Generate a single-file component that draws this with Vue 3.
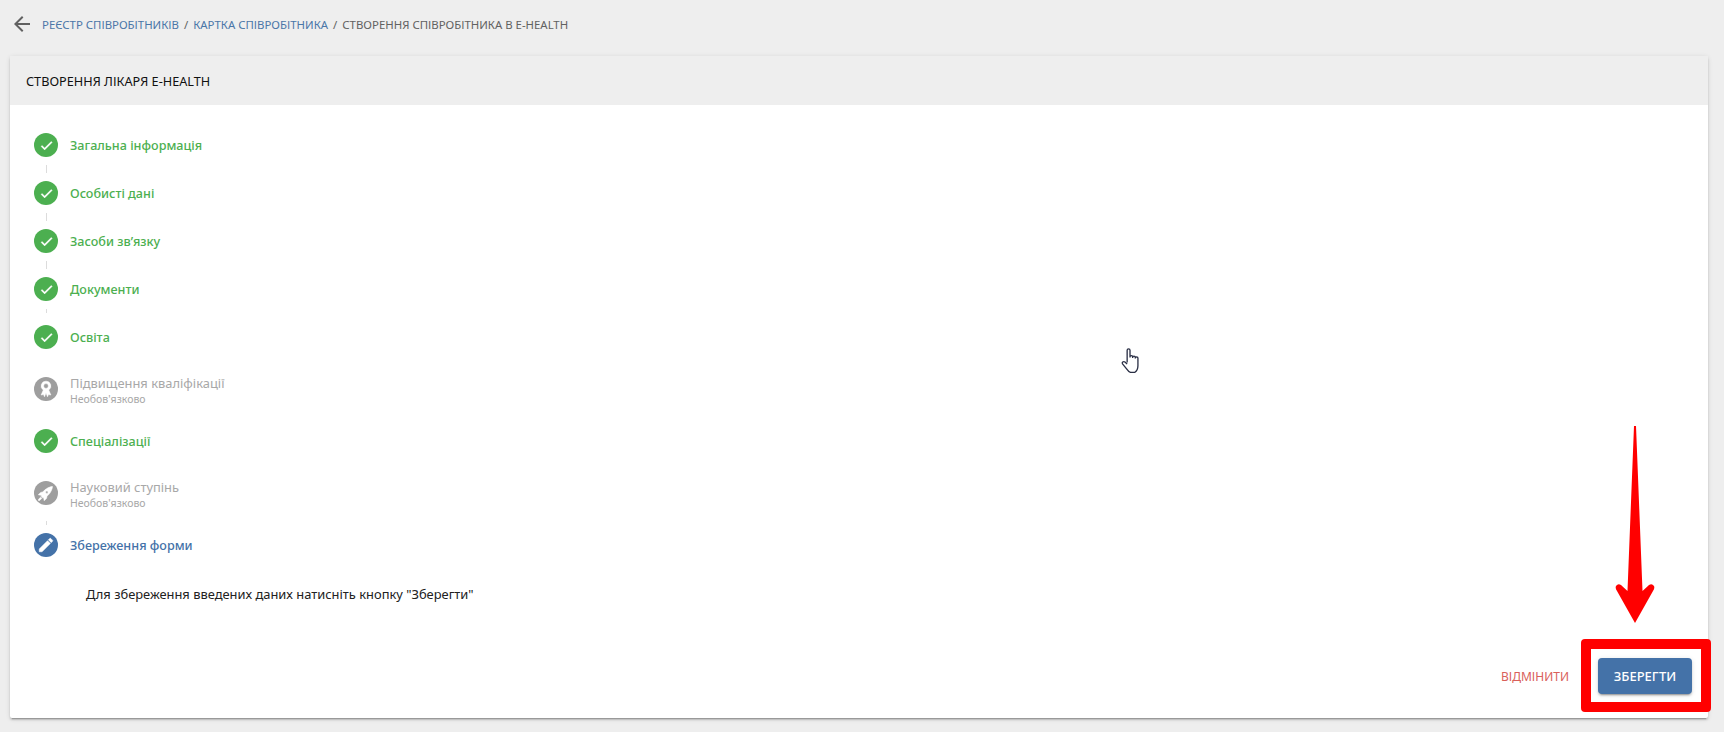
<script setup>
const check = 'M9 16.17L4.83 12l-1.42 1.41L9 19 21 7l-1.41-1.41z'
const pencil = 'M3 17.25V21h3.75L17.81 9.94l-3.75-3.75L3 17.25zM20.71 7.04c.39-.39.39-1.02 0-1.41l-2.34-2.34c-.39-.39-1.02-.39-1.41 0l-1.83 1.83 3.75 3.75 1.83-1.83z'
const rocket = 'M2.81,14.12L5.64,11.29L8.17,10.79C11.39,6.41 17.55,4.22 19.78,4.22C19.78,6.45 17.59,12.61 13.21,15.83L12.71,18.36L9.88,21.19L9.17,17.66C7.76,17.66 7.76,17.66 7.05,16.95C6.34,16.24 6.34,16.24 6.34,14.83L2.81,14.12M5.64,16.95L7.05,18.36L4.39,21.03H2.97V19.61L5.64,16.95M13,9.5A1.5,1.5 0 0,0 11.5,11A1.5,1.5 0 0,0 13,12.5A1.5,1.5 0 0,0 14.5,11A1.5,1.5 0 0,0 13,9.5Z'
const award = 'M12 1.500a6.500 6.500 0 0 0-3.600 11.900L5.500 20l3.200-.6 1.300 3 2-5.200 2 5.200 1.300-3 3.200.6-2.900-6.600A6.500 6.500 0 0 0 12 1.500zm0 3.300a3.200 3.200 0 1 1 0 6.400 3.200 3.200 0 0 1 0-6.400z'

const steps = [
  { label: 'Загальна інформація', state: 'done', icon: check, size: 15, line: { top: 8, h: 8 } },
  { label: 'Особисті дані', state: 'done', icon: check, size: 15, line: { top: 8, h: 8 } },
  { label: 'Засоби зв’язку', state: 'done', icon: check, size: 15, line: { top: 8, h: 8 } },
  { label: 'Документи', state: 'done', icon: check, size: 15, line: { top: 8, h: 4 } },
  { label: 'Освіта', state: 'done', icon: check, size: 15 },
  { label: 'Підвищення кваліфікації', state: 'optional', icon: award, size: 18 },
  { label: 'Спеціалізації', state: 'done', icon: check, size: 15 },
  { label: 'Науковий ступінь', state: 'optional', icon: rocket, size: 20, line: { top: 12, h: 4 } },
  { label: 'Збереження форми', state: 'active', icon: pencil, size: 18, last: true }
]
</script>

<template>
  <div class="page">
    <nav class="crumbs">
      <svg class="back" viewBox="0 0 24 24" width="24" height="24"><path d="M20 11H7.83l5.59-5.59L12 4l-8 8 8 8 1.41-1.41L7.83 13H20v-2z" /></svg>
      <a class="link">РЕЄСТР СПІВРОБІТНИКІВ</a>
      <span class="sep">/</span>
      <a class="link">КАРТКА СПІВРОБІТНИКА</a>
      <span class="sep">/</span>
      <span class="current">СТВОРЕННЯ СПІВРОБІТНИКА В E-HEALTH</span>
    </nav>

    <section class="card">
      <header class="card-head">СТВОРЕННЯ ЛІКАРЯ E-HEALTH</header>
      <div class="card-body">
        <template v-for="s in steps" :key="s.label">
          <div class="step" :class="[s.state]">
            <span class="dot">
              <svg viewBox="0 0 24 24" :width="s.size" :height="s.size"><path :d="s.icon" fill="#fff" stroke="#fff" stroke-width="0.7" /></svg>
            </span>
            <div class="step-text">
              <div class="label">{{ s.label }}</div>
              <div v-if="s.state === 'optional'" class="hint">Необов'язково</div>
            </div>
          </div>
          <div v-if="!s.last" class="gap">
            <i v-if="s.line" class="line" :style="{ marginTop: s.line.top + 'px', height: s.line.h + 'px' }"></i>
          </div>
        </template>
        <p class="note">Для збереження введених даних натисніть кнопку "Зберегти"</p>
      </div>
      <footer class="card-foot">
        <button class="btn-cancel">ВІДМІНИТИ</button>
        <button class="btn-save">ЗБЕРЕГТИ</button>
      </footer>
    </section>

    <div class="red-box"></div>
    <svg class="red-arrow" viewBox="0 0 44 200" width="44" height="200">
      <path d="M21 1 L23 1 L29.500 166 L36 160 Q39 158 41 161 Q42 163 40 166 L22 198 L4 166 Q2 163 3 161 Q5 158 8 160 L14.500 166 Z" fill="#f00" />
    </svg>
    <svg class="cursor" viewBox="0 0 20 26" width="22" height="27" preserveAspectRatio="none">
      <path d="M6.5 15V3.2c0-2 2.6-2 2.6 0V10m0-.5c0-1.6 2.4-1.6 2.4 0v1m0-.5c0-1.5 2.400-1.500 2.400 0v1m0-.4c0-1.400 2.400-1.400 2.400 0V18c0 3-1.600 5.500-3 6.500H9.500c-1.500-.6-2.500-2-3.500-3.500L2.300 16.300c-1-1.500.8-3 2.200-1.800L6.500 16.500" fill="#fff" stroke="#2a2f45" stroke-width="1.200" stroke-linejoin="round" />
    </svg>
  </div>
</template>

<style>
html, body { margin: 0; overflow: hidden; }
</style>

<style scoped>
.page {
  position: relative;
  box-sizing: border-box;
  width: 1724px;
  height: 732px;
  padding: 0 16px 14px 10px;
  display: flex;
  flex-direction: column;
  background: #eeeeee;
  font-family: "Noto Sans", "Open Sans", sans-serif;
  overflow: hidden;
}
.crumbs {
  height: 48px;
  flex: none;
  display: flex;
  align-items: center;
  gap: 5px;
  font-size: 11.4px;
  color: #616161;
  white-space: nowrap;
}
.back { fill: #616161; margin-right: 3px; width: 24px; height: 24px; }
.link { color: #4a76a8; }
.sep { color: #616161; }
.card {
  margin-top: 8px;
  flex: 1;
  display: flex;
  flex-direction: column;
  background: #fff;
  border-radius: 2px;
  box-shadow: 0 3px 1px -2px rgba(0,0,0,.2), 0 2px 2px 0 rgba(0,0,0,.14), 0 1px 5px 0 rgba(0,0,0,.12);
}
.card-head {
  height: 49px;
  flex: none;
  box-sizing: border-box;
  padding-left: 16px;
  display: flex;
  align-items: center;
  background: #eeeeee;
  font-size: 12.7px;
  color: #111;
}
.card-body {
  flex: 1;
  padding: 28px 24px 0;
}
.step {
  display: flex;
  align-items: center;
  gap: 12px;
}
.dot {
  width: 24px;
  height: 24px;
  border-radius: 50%;
  flex: none;
  display: flex;
  align-items: center;
  justify-content: center;
}
.done .dot { background: #4caf50; }
.optional .dot { background: #9e9e9e; }
.active .dot { background: #4472a8; }
.step-text { padding-top: 1px; }
.label { font-size: 12.6px; font-weight: 500; line-height: 18px; }
.done .label { color: #4caf50; }
.active .label { color: #4472a8; }
.optional .label { color: #a8a8a8; font-size: 12.9px; font-weight: 400; line-height: 18px; }
.optional .step-text { height: 31px; }
.hint { font-size: 10.5px; line-height: 14px; color: #a8a8a8; }
.gap { height: 24px; display: flex; align-items: flex-start; }
.line { display: block; width: 1px; margin-left: 12px; background: #dcdcdc; }
.note {
  margin: 28px 0 0 52px;
  font-size: 12.9px;
  line-height: 18px;
  color: #212121;
}
.card-foot {
  flex: none;
  display: flex;
  justify-content: flex-end;
  align-items: center;
  gap: 29px;
  padding: 0 16px 24px 0;
}
.btn-cancel, .btn-save {
  font: inherit;
  border: 0;
  background: none;
  padding: 0;
  font-size: 13px;
  font-weight: 500;
}
.btn-cancel { color: #d9605a; font-size: 12px; font-weight: 400; }
.btn-save {
  width: 94px;
  height: 36px;
  border-radius: 4px;
  background: #4472a8;
  color: #fff;
  box-shadow: 0 3px 1px -2px rgba(0,0,0,.2), 0 2px 2px 0 rgba(0,0,0,.14), 0 1px 5px 0 rgba(0,0,0,.12);
}
.red-box {
  position: absolute;
  left: 1581px;
  top: 639px;
  width: 130px;
  height: 73px;
  box-sizing: border-box;
  border: 10px solid #f00;
  border-radius: 4px;
}
.red-arrow { position: absolute; left: 1613px; top: 425px; }
.cursor { position: absolute; left: 1120px; top: 347px; }
</style>
